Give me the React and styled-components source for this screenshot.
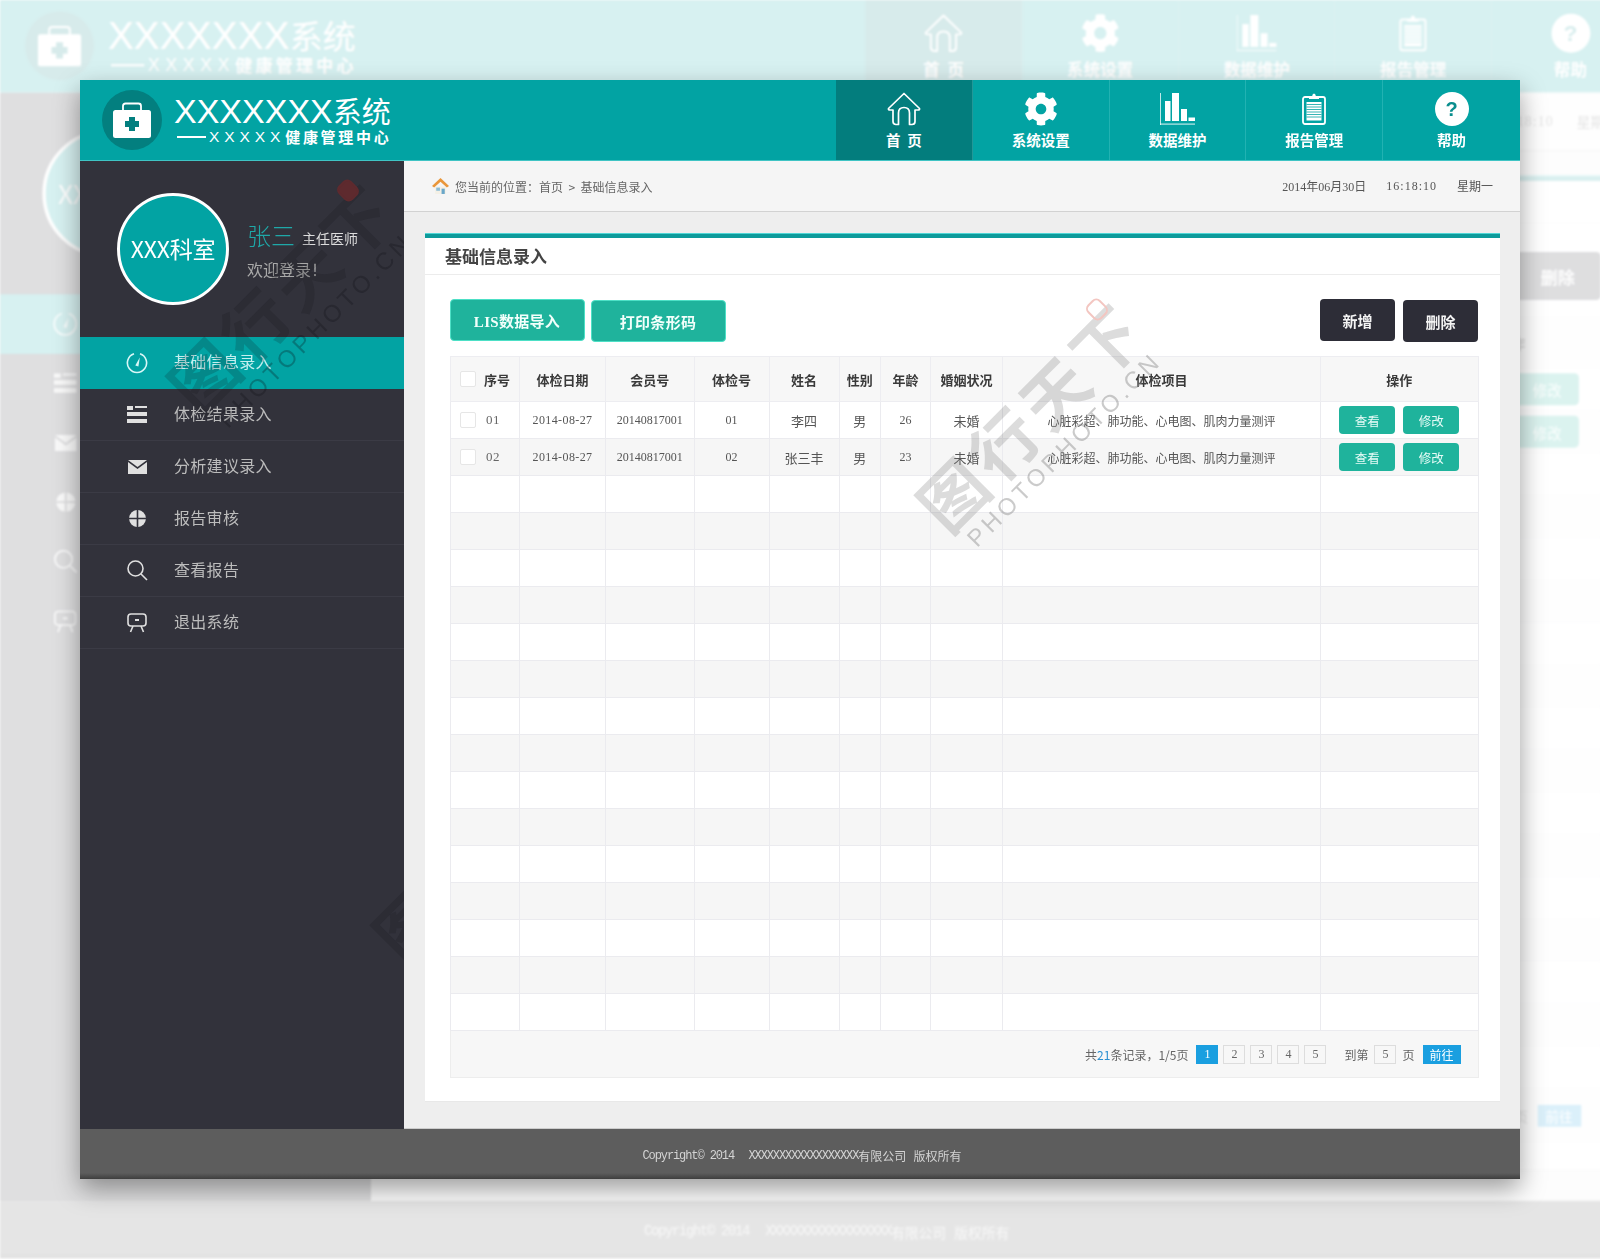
import styled, { createGlobalStyle } from 'styled-components';
import { FaCog } from 'react-icons/fa';

const SANS = `"Liberation Sans", "Noto Sans CJK SC", sans-serif`;
const SONG = `"Liberation Serif", "Noto Sans CJK SC", serif`;
const TEAL = '#02a3a3';

const GlobalStyle = createGlobalStyle`
  html, body { margin: 0; padding: 0; background: #fff; }
  * { box-sizing: border-box; }
`;

const NAV = [
  { label: '首  页', icon: 'home', active: true },
  { label: '系统设置', icon: 'gear' },
  { label: '数据维护', icon: 'chart' },
  { label: '报告管理', icon: 'clip' },
  { label: '帮助', icon: 'help' },
];

const MENU = [
  { label: '基础信息录入', icon: 'gauge', active: true },
  { label: '体检结果录入', icon: 'list' },
  { label: '分析建议录入', icon: 'mail' },
  { label: '报告审核', icon: 'globe' },
  { label: '查看报告', icon: 'search' },
  { label: '退出系统', icon: 'screen' },
];

const COLS = [69.5, 86, 88.5, 75, 70, 41.5, 50, 72, 318, 157.5];
const HEADS = ['体检日期', '会员号', '体检号', '姓名', '性别', '年龄', '婚姻状况', '体检项目'];
const ITEMS = '心脏彩超、肺功能、心电图、肌肉力量测评';
const ROWS = [
  { no: '01', date: '2014-08-27', member: '20140817001', exam: '01', name: '李四', sex: '男', age: '26', marriage: '未婚' },
  { no: '02', date: '2014-08-27', member: '20140817001', exam: '02', name: '张三丰', sex: '男', age: '23', marriage: '未婚' },
];
const EMPTY_ROWS = Array.from({ length: 15 }, (_, i) => i);

function HomeIcon() {
  return (
    <svg width="34" height="34" viewBox="0 0 34 34" fill="none" stroke="#fff" strokeWidth="1.7" strokeLinejoin="round">
      <path d="M17 1.5 L32.5 16.5 Q33 18 31 18 L28 18 V29.5 Q28 32.5 25 32.5 H22.5 V21 Q22.5 15.5 17 15.5 Q11.5 15.5 11.5 21 V32.5 H9 Q6 32.5 6 29.5 V18 L3 18 Q1 18 1.5 16.5 Z" />
    </svg>
  );
}

function ChartIcon() {
  return (
    <svg width="35" height="32" viewBox="0 0 35 32" fill="#fff">
      <rect x="0" y="0" width="1" height="32" opacity=".75" />
      <rect x="0" y="30.5" width="35" height="1.2" opacity=".75" />
      <rect x="5" y="8" width="5.5" height="20" />
      <rect x="12" y="0" width="7" height="28" />
      <rect x="21" y="16" width="6" height="12" />
      <rect x="28.5" y="24.5" width="6.5" height="3.5" />
    </svg>
  );
}

function ClipIcon() {
  return (
    <svg width="24" height="32" viewBox="0 0 24 32">
      <rect x="1" y="4" width="22" height="27" rx="2" fill="none" stroke="#fff" strokeWidth="1.8" />
      <path d="M7 6 V3.5 H10 Q10.5 0.5 12 0.5 Q13.5 0.5 14 3.5 H17 V6 Z" fill="#fff" />
      <rect x="4.5" y="9" width="15" height="18.5" fill="#fff" />
      <path d="M4.5 11.5 H19.5 M4.5 14 H19.5 M4.5 16.5 H19.5 M4.5 19 H19.5 M4.5 21.5 H19.5 M4.5 24 H19.5" stroke={TEAL} strokeWidth=".8" />
    </svg>
  );
}

function KitIcon() {
  return (
    <svg width="38" height="36" viewBox="0 0 38 36">
      <path d="M10 9 V4 Q10 1.5 12.5 1.5 H25.5 Q28 1.5 28 4 V9" fill="none" stroke="#fff" strokeWidth="1.8" />
      <rect x="0" y="8" width="38" height="28" rx="2.5" fill="#fff" />
      <path d="M16 15 H22 V19 H26 V25 H22 V29 H16 V25 H12 V19 H16 Z" fill="#037f7f" />
    </svg>
  );
}

function HouseMark() {
  return (
    <svg width="17" height="16" viewBox="0 0 16 15">
      <path d="M3 8 H13 V15 H3 Z" fill="#f4f0e6" />
      <path d="M9 10 H12 V15 H9 Z" fill="#6aa7c9" />
      <path d="M4 9 H7.5 V12 H4 Z" fill="#8dbdd6" />
      <path d="M8 0 L16 7.5 L14 9 L8 3.6 L2 9 L0 7.5 Z" fill="#e9963a" />
    </svg>
  );
}

function MenuIcon({ name }) {
  const stroke = { fill: 'none', stroke: 'currentColor', strokeWidth: 1.6 };
  if (name === 'gauge') {
    return (
      <svg width="22" height="22" viewBox="0 0 22 22">
        <path d="M8 1.8 A9.6 9.6 0 1 0 14 1.8" {...stroke} />
        <path d="M9.3 13.5 L13.8 5.6 L12.4 14.4 Z" fill="currentColor" />
      </svg>
    );
  }
  if (name === 'list') {
    return (
      <svg width="20" height="18" viewBox="0 0 20 18" fill="currentColor">
        <rect x="0" y="0" width="6" height="4" />
        <rect x="8" y="0" width="12" height="2" />
        <rect x="0" y="6" width="20" height="4" />
        <rect x="0" y="13" width="20" height="4" />
      </svg>
    );
  }
  if (name === 'mail') {
    return (
      <svg width="19" height="14" viewBox="0 0 19 14" fill="currentColor">
        <path d="M0 0 H19 L9.5 7 Z" />
        <path d="M0 2 L9.5 9 L19 2 V14 H0 Z" />
      </svg>
    );
  }
  if (name === 'globe') {
    return (
      <svg width="17" height="17" viewBox="0 0 17 17" fill="currentColor">
        <path d="M7.7 0.1 V7.7 H0.1 A8.5 8.5 0 0 1 7.7 0.1 Z" />
        <path d="M9.3 0.1 A8.5 8.5 0 0 1 16.9 7.7 H9.3 Z" />
        <path d="M0.1 9.3 H7.7 V16.9 A8.5 8.5 0 0 1 0.1 9.3 Z" />
        <path d="M9.3 9.3 H16.9 A8.5 8.5 0 0 1 9.3 16.9 Z" />
      </svg>
    );
  }
  if (name === 'search') {
    return (
      <svg width="21" height="21" viewBox="0 0 21 21" {...stroke}>
        <circle cx="8.5" cy="8.5" r="7.5" />
        <path d="M14 14 L20 20" />
      </svg>
    );
  }
  return (
    <svg width="20" height="20" viewBox="0 0 20 20" {...stroke}>
      <rect x="1" y="1" width="18" height="12" rx="3" />
      <path d="M8 7 H12" strokeWidth="2" />
      <path d="M6 13 L3.5 19 M14 13 L16.5 19" />
    </svg>
  );
}

function NavGlyph({ name }) {
  if (name === 'home') return <HomeIcon />;
  if (name === 'gear') return <FaCog size={34} color="#fff" />;
  if (name === 'chart') return <ChartIcon />;
  if (name === 'clip') return <ClipIcon />;
  return <HelpDisc>?</HelpDisc>;
}

function AppWindow() {
  return (
    <Frame>
      <Header>
        <Brand>
          <LogoDisc><KitIcon /></LogoDisc>
          <BrandText>
            <BrandTitle><BrandLatin>XXXXXXX</BrandLatin>系统</BrandTitle>
            <BrandSub><BrandDash /><BrandSubLatin>XXXXX</BrandSubLatin>健康管理中心</BrandSub>
          </BrandText>
        </Brand>
        <Nav>
          {NAV.map((item) => (
            <NavItem key={item.label} $active={item.active}>
              <NavIconSlot><NavGlyph name={item.icon} /></NavIconSlot>
              <NavLabel>{item.label}</NavLabel>
            </NavItem>
          ))}
        </Nav>
      </Header>

      <Middle>
        <Sidebar>
          <Profile>
            <Avatar>XXX科室</Avatar>
            <ProfileInfo>
              <NameLine>
                <UserName>张三</UserName>
                <UserRole>主任医师</UserRole>
              </NameLine>
              <Welcome>欢迎登录！</Welcome>
            </ProfileInfo>
          </Profile>
          {MENU.map((item) => (
            <MenuRow key={item.label} $active={item.active}>
              <MenuIconSlot $active={item.active}><MenuIcon name={item.icon} /></MenuIconSlot>
              {item.label}
            </MenuRow>
          ))}
        </Sidebar>

        <Main>
          <Crumbs>
            <CrumbPath>
              <HouseMark />
              <span>您当前的位置：首页 &nbsp;&gt;&nbsp; 基础信息录入</span>
            </CrumbPath>
            <CrumbClock>
              <span>2014年06月30日</span>
              <ClockTime>16:18:10</ClockTime>
              <span>星期一</span>
            </CrumbClock>
          </Crumbs>

          <Content>
            <Panel>
              <PanelTitle>基础信息录入</PanelTitle>
              <PanelBody>
                <Toolbar>
                  <ToolGroup>
                    <TealButton>LIS数据导入</TealButton>
                    <TealButton $nudge={1}>打印条形码</TealButton>
                  </ToolGroup>
                  <ToolGroup $gap={8}>
                    <DarkButton>新增</DarkButton>
                    <DarkButton $nudge={1}>删除</DarkButton>
                  </ToolGroup>
                </Toolbar>

                <Table>
                  <colgroup>
                    {COLS.map((w, i) => <Col key={i} $w={w} />)}
                  </colgroup>
                  <thead>
                    <tr>
                      <HeadCell>
                        <NoCell>
                          <Check />
                          <span>序号</span>
                        </NoCell>
                      </HeadCell>
                      {HEADS.map((h) => <HeadCell key={h}>{h}</HeadCell>)}
                      <HeadCell>操作</HeadCell>
                    </tr>
                  </thead>
                  <tbody>
                    {ROWS.map((r, i) => (
                      <Row key={r.no} $shade={i % 2 === 1}>
                        <Cell>
                          <NoCell>
                            <Check />
                            <NoText>{r.no}</NoText>
                          </NoCell>
                        </Cell>
                        <NumCell $track={0.4}>{r.date}</NumCell>
                        <NumCell>{r.member}</NumCell>
                        <NumCell>{r.exam}</NumCell>
                        <Cell>{r.name}</Cell>
                        <Cell>{r.sex}</Cell>
                        <NumCell>{r.age}</NumCell>
                        <Cell>{r.marriage}</Cell>
                        <ItemCell>{ITEMS}</ItemCell>
                        <Cell>
                          <Actions>
                            <RowButton>查看</RowButton>
                            <RowButton>修改</RowButton>
                          </Actions>
                        </Cell>
                      </Row>
                    ))}
                    {EMPTY_ROWS.map((n) => (
                      <Row key={n} $shade={n % 2 === 1}>
                        {COLS.map((_, i) => <Cell key={i} />)}
                      </Row>
                    ))}
                  </tbody>
                  <tfoot>
                    <tr>
                      <PagerCell colSpan={10}>
                        <Pager>
                          <PagerText>共<Hit>21</Hit>条记录，1/5页</PagerText>
                          <PageBoxes>
                            {[1, 2, 3, 4, 5].map((p) => <PageBox key={p} $on={p === 1}>{p}</PageBox>)}
                          </PageBoxes>
                          <GoTo>
                            <PagerText>到第</PagerText>
                            <PageBox>5</PageBox>
                            <PagerText>页</PagerText>
                          </GoTo>
                          <GoButton>前往</GoButton>
                        </Pager>
                      </PagerCell>
                    </tr>
                  </tfoot>
                </Table>
              </PanelBody>
            </Panel>
          </Content>
        </Main>
      </Middle>

      <Footer><FootMono>Copyright© 2014</FootMono>&nbsp;&nbsp;<FootMono>XXXXXXXXXXXXXXXXXX</FootMono>有限公司 版权所有</Footer>
    </Frame>
  );
}

function Watermark({ x, y, dark }) {
  return (
    <MarkGroup $x={x} $y={y}>
      <MarkSeal $dark={dark} />
      <MarkScript $dark={dark}>图行天下</MarkScript>
      <MarkLatin $dark={dark}>PHOTOPHOTO.CN</MarkLatin>
    </MarkGroup>
  );
}

export default function App() {
  return (
    <Stage>
      <GlobalStyle />
      <Ghost aria-hidden="true"><AppWindow /></Ghost>
      <Front><AppWindow /></Front>
      <SidebarMarks>
        <Watermark x={210} y={144} dark />
        <Watermark x={415} y={693} dark />
      </SidebarMarks>
      <PageMarks>
        <Watermark x={1039} y={424} />
      </PageMarks>
    </Stage>
  );
}

const Stage = styled.div`
  position: relative;
  width: 1600px;
  height: 1259px;
  overflow: hidden;
  padding: 80px 0 0 80px;
  background: #fff;
  font-family: ${SANS};
`;

const Ghost = styled.div`
  position: absolute;
  top: 0;
  left: 0;
  transform: scale(1.145);
  transform-origin: 0 0;
  opacity: 0.16;
  filter: blur(0.7px);
`;

const Front = styled.div`
  position: relative;
  width: 1440px;
  box-shadow: 0 10px 24px rgba(0, 0, 0, 0.38);
`;

const Frame = styled.div`
  width: 1440px;
  height: 1099px;
  display: flex;
  flex-direction: column;
  filter: blur(0.4px);
`;

const Header = styled.header`
  height: 81px;
  flex: none;
  display: flex;
  justify-content: space-between;
  background: ${TEAL};
  border-bottom: 1px solid #3fc4c4;
`;

const Brand = styled.div`
  display: flex;
  align-items: center;
  padding-left: 22px;
  gap: 12px;
`;

const LogoDisc = styled.div`
  width: 60px;
  height: 60px;
  border-radius: 50%;
  background: #037f7f;
  display: flex;
  align-items: center;
  justify-content: center;
`;

const BrandText = styled.div`
  display: flex;
  flex-direction: column;
  color: #fff;
  margin-top: 2px;
`;

const BrandTitle = styled.div`
  font-size: 29px;
  line-height: 30px;
  font-family: "Noto Sans CJK SC", sans-serif;
  font-weight: 400;
  height: 32px;
`;

const BrandLatin = styled.span`
  font-family: "Liberation Sans", sans-serif;
  font-size: 34px;
`;

const BrandSub = styled.div`
  display: flex;
  align-items: center;
  font-size: 15px;
  line-height: 20px;
  letter-spacing: 2.7px;
  font-weight: 700;
  font-family: "Noto Sans CJK SC", sans-serif;
`;

const BrandDash = styled.span`
  width: 29px;
  height: 1.5px;
  margin: 0 3px;
  background: #fff;
`;

const BrandSubLatin = styled.span`
  font-family: "Liberation Sans", sans-serif;
  font-size: 15.5px;
  font-weight: 400;
  letter-spacing: 4.9px;
`;

const Nav = styled.nav`
  display: flex;
`;

const NavItem = styled.div`
  width: 136.8px;
  display: flex;
  flex-direction: column;
  align-items: center;
  padding-top: 12px;
  background: ${(p) => (p.$active ? '#037d7d' : 'transparent')};
  border-right: 1px solid rgba(120, 220, 220, 0.28);

  &:last-child {
    border-right: 0;
  }
`;

const NavIconSlot = styled.div`
  height: 34px;
  display: flex;
  align-items: center;
  justify-content: center;
`;

const NavLabel = styled.div`
  margin-top: 4px;
  font-family: "Noto Sans CJK SC", sans-serif;
  font-size: 14.5px;
  line-height: 20px;
  font-weight: 700;
  color: #fff;
  white-space: pre;
`;

const HelpDisc = styled.div`
  width: 34px;
  height: 34px;
  border-radius: 50%;
  background: #fff;
  color: #0a8e8e;
  font: 700 20px/34px "Liberation Sans", sans-serif;
  text-align: center;
`;

const Middle = styled.div`
  flex: 1;
  display: flex;
  min-height: 0;
`;

const Sidebar = styled.aside`
  width: 324px;
  flex: none;
  background: #32323b;
`;

const Profile = styled.div`
  height: 176px;
  display: flex;
  align-items: center;
  padding-left: 37px;
  gap: 18px;
`;

const Avatar = styled.div`
  width: 112px;
  height: 112px;
  padding-bottom: 3px;
  border-radius: 50%;
  border: 3px solid #fff;
  background: ${TEAL};
  color: #fff;
  font-family: "Noto Sans CJK SC", sans-serif;
  font-size: 23px;
  font-weight: 400;
  letter-spacing: -0.2px;
  display: flex;
  align-items: center;
  justify-content: center;
`;

const ProfileInfo = styled.div`
  display: flex;
  flex-direction: column;
  gap: 7px;
  margin-top: 2px;
  font-family: "Noto Sans CJK SC", sans-serif;
`;

const NameLine = styled.div`
  display: flex;
  align-items: flex-end;
  gap: 7px;
`;

const UserName = styled.span`
  font-size: 24px;
  line-height: 30px;
  font-weight: 300;
  color: #1fa8a8;
`;

const UserRole = styled.span`
  font-size: 14px;
  line-height: 24px;
  color: #ddd;
`;

const Welcome = styled.div`
  font-size: 16px;
  line-height: 24px;
  color: #a9a9a9;
`;

const MenuRow = styled.div`
  height: 52px;
  padding-bottom: 3px;
  display: flex;
  align-items: center;
  font-family: "Noto Sans CJK SC", sans-serif;
  font-size: 16px;
  letter-spacing: 0.3px;
  background: ${(p) => (p.$active ? TEAL : 'transparent')};
  color: ${(p) => (p.$active ? '#c4efef' : '#bcbcbc')};
  border-bottom: 1px solid ${(p) => (p.$active ? TEAL : '#3b3b45')};
`;

const MenuIconSlot = styled.div`
  width: 94px;
  padding: 3px 0 0 20px;
  display: flex;
  justify-content: center;
  color: ${(p) => (p.$active ? '#d9f7f7' : '#e0e0e0')};
`;

const Main = styled.main`
  flex: 1;
  min-width: 0;
  display: flex;
  flex-direction: column;
  background: #eeeeee;
  border-bottom: 1px solid #ccc;
`;

const Crumbs = styled.div`
  height: 51px;
  flex: none;
  display: flex;
  align-items: center;
  justify-content: space-between;
  padding: 0 27px 0 28px;
  background: #f5f5f5;
  border-bottom: 1px solid #d2d2d2;
  font-family: "Noto Sans CJK SC", sans-serif;
  font-size: 12px;
  color: #666;
`;

const CrumbPath = styled.div`
  display: flex;
  align-items: center;
  gap: 6px;
`;

const CrumbClock = styled.div`
  display: flex;
  align-items: center;
  gap: 20px;
  font-family: ${SONG};
  font-size: 12px;
  color: #555;
`;

const ClockTime = styled.span`
  letter-spacing: 1px;
`;

const Content = styled.div`
  flex: 1;
  padding: 22px 20px 27px 21px;
  min-height: 0;
`;

const Panel = styled.section`
  height: 100%;
  display: flex;
  flex-direction: column;
  background: #fff;
  border-top: 4px solid #0d9b9b;
  box-shadow: 0 -1px 0 #4fd6d6, 0 1px 0 #e8e8e8;
`;

const PanelTitle = styled.h2`
  height: 37px;
  margin: 0;
  flex: none;
  padding-left: 20px;
  font: 700 17px/36px "Noto Sans CJK SC", sans-serif;
  color: #444;
  border-bottom: 1px solid #ececec;
`;

const PanelBody = styled.div`
  flex: 1;
  padding: 24px 22px 0 24.5px;
`;

const Toolbar = styled.div`
  display: flex;
  justify-content: space-between;
  height: 57px;
`;

const ToolGroup = styled.div`
  display: flex;
  align-items: flex-start;
  gap: ${(p) => p.$gap || 6}px;
`;

const TealButton = styled.button`
  width: 135px;
  height: 42px;
  margin-top: ${(p) => p.$nudge || 0}px;
  padding: 0;
  border: 1px solid #4de0c6;
  border-radius: 4px;
  background: #1fb39c;
  color: #f2fffb;
  font-family: ${SONG};
  font-size: 15px;
  font-weight: 700;
  letter-spacing: 0.3px;
`;

const DarkButton = styled.button`
  width: 75px;
  height: 42px;
  margin-top: ${(p) => p.$nudge || 0}px;
  padding: 0;
  border: 0;
  border-radius: 4px;
  background: #2d2d37;
  color: #f4f4f4;
  font-family: "Noto Sans CJK SC", sans-serif;
  font-size: 15px;
  font-weight: 700;
`;

const Table = styled.table`
  width: 1028px;
  table-layout: fixed;
  border-collapse: collapse;
  font-family: "Noto Sans CJK SC", sans-serif;
  font-size: 13px;
  color: #555;
`;

const Col = styled.col`
  width: ${(p) => p.$w}px;
`;

const HeadCell = styled.th`
  height: 45px;
  padding: 0;
  background: #f7f7f7;
  border: 1px solid #ededf1;
  font-size: 13px;
  font-weight: 700;
  color: #3a3a3a;
`;

const Row = styled.tr`
  background: ${(p) => (p.$shade ? '#f6f6f6' : '#fff')};
`;

const Cell = styled.td`
  height: 37px;
  padding: 0;
  text-align: center;
  border: 1px solid #ebebef;
`;

const NumCell = styled(Cell)`
  padding-top: 1px;
  font-family: "Liberation Serif", serif;
  font-size: 12px;
  letter-spacing: ${(p) => p.$track || 0}px;
  color: #555;
`;

const ItemCell = styled(Cell)`
  font-size: 12px;
  white-space: nowrap;
`;

const NoCell = styled.div`
  display: flex;
  align-items: center;
  padding-left: 9.5px;
  gap: 8px;
`;

const Check = styled.span`
  width: 16px;
  height: 16px;
  flex: none;
  background: #fff;
  border: 1px solid #e6e6e6;
  border-radius: 2px;
`;

const NoText = styled.span`
  margin-left: 2px;
  font-family: "Liberation Serif", serif;
  font-size: 13px;
  letter-spacing: 0.5px;
  color: #666;
`;

const Actions = styled.div`
  display: flex;
  justify-content: center;
  gap: 8px;
`;

const RowButton = styled.button`
  width: 56px;
  height: 28px;
  padding: 0;
  border: 0;
  border-radius: 4px;
  background: #1fb39c;
  color: #e6fbf6;
  font-family: "Noto Sans CJK SC", sans-serif;
  font-size: 12.5px;
`;

const PagerCell = styled.td`
  height: 47px;
  padding: 1px 17px 0 0;
  background: #f7f7f7;
  border: 1px solid #ededed;
`;

const Pager = styled.div`
  display: flex;
  align-items: center;
  justify-content: flex-end;
  font-size: 12px;
`;

const PagerText = styled.span`
  color: #666;
`;

const Hit = styled.span`
  color: #2a8fd0;
`;

const PageBoxes = styled.div`
  display: flex;
  gap: 5px;
  margin-left: 8px;
`;

const PageBox = styled.span`
  width: 22px;
  height: 19px;
  display: flex;
  align-items: center;
  justify-content: center;
  font-family: "Liberation Serif", serif;
  font-size: 12px;
  background: ${(p) => (p.$on ? '#1a9fe0' : 'transparent')};
  color: ${(p) => (p.$on ? '#fff' : '#666')};
  border: 1px solid ${(p) => (p.$on ? '#1a9fe0' : '#ddd')};
`;

const GoTo = styled.div`
  display: flex;
  align-items: center;
  gap: 6px;
  margin-left: 18px;
`;

const GoButton = styled.span`
  width: 38px;
  height: 19px;
  margin-left: 8px;
  background: #1a9fe0;
  color: #fff;
  font-size: 12px;
  line-height: 19px;
  text-align: center;
`;

const Footer = styled.footer`
  height: 50px;
  flex: none;
  display: flex;
  align-items: center;
  justify-content: center;
  padding: 4px 0 0 4px;
  background: linear-gradient(#5d5d5d 88%, #3e3e3e);
  color: #d4d4d4;
  font-family: "Liberation Mono", "Noto Sans CJK SC", monospace;
  font-size: 12px;
  white-space: pre;
`;

const FootMono = styled.span`
  letter-spacing: -1.1px;
`;

const SidebarMarks = styled.div`
  position: absolute;
  left: 80px;
  top: 161px;
  width: 324px;
  height: 968px;
  overflow: hidden;
  pointer-events: none;
`;

const PageMarks = styled.div`
  position: absolute;
  inset: 0;
  overflow: hidden;
  pointer-events: none;
`;

const MarkGroup = styled.div`
  position: absolute;
  left: ${(p) => p.$x}px;
  top: ${(p) => p.$y}px;
  width: 290px;
  transform: translate(-50%, -50%) rotate(-45deg);
  display: flex;
  flex-direction: column;
  align-items: center;
`;

const MarkSeal = styled.span`
  position: absolute;
  left: 258px;
  top: 0;
  width: 18px;
  height: 20px;
  border-radius: 6px;
  border: 2px solid ${(p) => (p.$dark ? '#5e2a2e' : '#f3c6c1')};
  background: ${(p) => (p.$dark ? '#5e2a2e' : 'transparent')};
`;

const MarkScript = styled.div`
  font-family: "Noto Sans CJK SC", sans-serif;
  font-size: 66px;
  line-height: 72px;
  font-weight: 700;
  letter-spacing: 6px;
  white-space: nowrap;
  color: ${(p) => (p.$dark ? 'rgba(15, 15, 20, 0.18)' : 'rgba(120, 120, 120, 0.26)')};
`;

const MarkLatin = styled.div`
  font-family: "Liberation Sans", sans-serif;
  font-size: 24px;
  line-height: 28px;
  letter-spacing: 4px;
  white-space: nowrap;
  color: ${(p) => (p.$dark ? 'rgba(15, 15, 20, 0.28)' : 'rgba(130, 130, 130, 0.42)')};
`;
